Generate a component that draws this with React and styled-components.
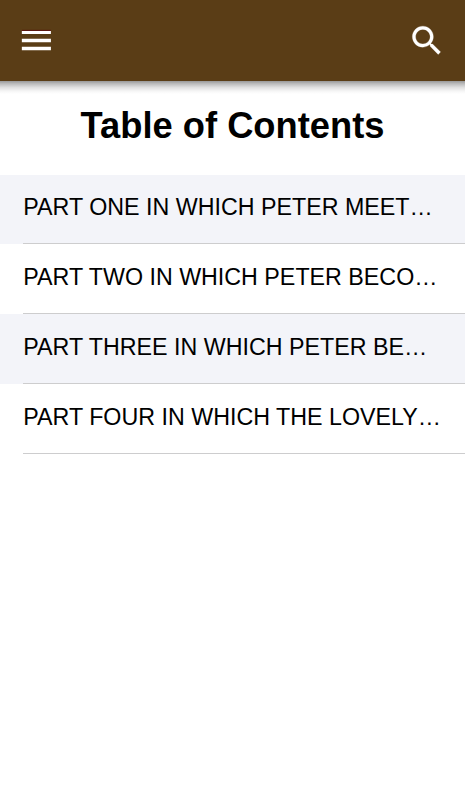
import React from 'react';
import styled, { createGlobalStyle } from 'styled-components';

const chapters = [
    'PART ONE IN WHICH PETER MEET…',
    'PART TWO IN WHICH PETER BECO…',
    'PART THREE IN WHICH PETER BE…',
    'PART FOUR IN WHICH THE LOVELY…',
];

const App = () => {
    return (
        <PageStyled>
            <GlobalStyle />
            <ToolbarStyled>
                <IconButton aria-label="Menu">
                    <svg viewBox="0 0 24 24">
                        <path d="M3 6h18v2.1H3zM3 11h18v2.1H3zM3 16h18v2.1H3z" />
                        <path className="edge" d="M3 5.5h18v.62H3z" />
                    </svg>
                </IconButton>
                <IconButton aria-label="Search">
                    <svg viewBox="0.3 -0.2 24 24">
                        <path d="M15.5 14h-.79l-.28-.27C15.41 12.59 16 11.11 16 9.5 16 5.91 13.09 3 9.5 3S3 5.91 3 9.5 5.91 16 9.5 16c1.61 0 3.09-.59 4.23-1.57l.27.28v.79l5 4.99L20.49 19l-4.99-5zm-6 0C7.01 14 5 11.99 5 9.5S7.01 5 9.5 5 14 7.01 14 9.5 11.99 14 9.5 14z" />
                    </svg>
                </IconButton>
            </ToolbarStyled>
            <Title>Table of Contents</Title>
            <ChapterList>
                {chapters.map((chapter) => (
                    <ChapterRow key={chapter}>
                        <ChapterLink>{chapter}</ChapterLink>
                    </ChapterRow>
                ))}
            </ChapterList>
        </PageStyled>
    );
};

const GlobalStyle = createGlobalStyle`
    *{
        margin: 0;
        padding: 0;
        box-sizing: border-box;
    }
    body{
        background: #fff;
        color: #000;
        font-family: "Liberation Sans", Arial, sans-serif;
    }
`;

const PageStyled = styled.div`
    min-height: 100vh;
    overflow: hidden;
`;

const ToolbarStyled = styled.header`
    position: relative;
    display: flex;
    justify-content: space-between;
    align-items: center;
    height: 81px;
    padding: 0 18.5px 0 17px;
    background: #5a3d16;
    /* shadow under the bar, same strength across the full width */
    &::after{
        content: "";
        position: absolute;
        top: 100%;
        left: 0;
        right: 0;
        height: 13px;
        background: linear-gradient(rgba(0, 0, 0, 0.4), rgba(0, 0, 0, 0.27) 20%, rgba(0, 0, 0, 0.12) 50%, rgba(0, 0, 0, 0.03) 80%, transparent);
    }
`;

const IconButton = styled.button`
    width: 38.75px;
    height: 38.75px;
    border: none;
    background: none;
    svg{
        display: block;
        width: 100%;
        height: 100%;
        fill: #fff;
    }
    &:last-child svg{
        stroke: #fff;
        stroke-width: 0.15;
    }
    .edge{
        fill: #570c08;
    }
`;

const Title = styled.h1`
    height: 93.5px;
    padding-top: 24px;
    font-size: 36.3px;
    font-weight: 700;
    line-height: 42px;
    text-align: center;
`;

const ChapterList = styled.ul`
    list-style: none;
`;

const ChapterRow = styled.li`
    padding-left: 23.25px;
    line-height: 66px;
    &:nth-child(odd){
        background: #f3f4f9;
    }
    &:first-child{
        line-height: 65px;
    }
`;

const ChapterLink = styled.div`
    height: 69.75px;
    border-bottom: 1px solid #cdcdce;
    font-size: 23.25px;
    white-space: nowrap;
`;

export default App;
